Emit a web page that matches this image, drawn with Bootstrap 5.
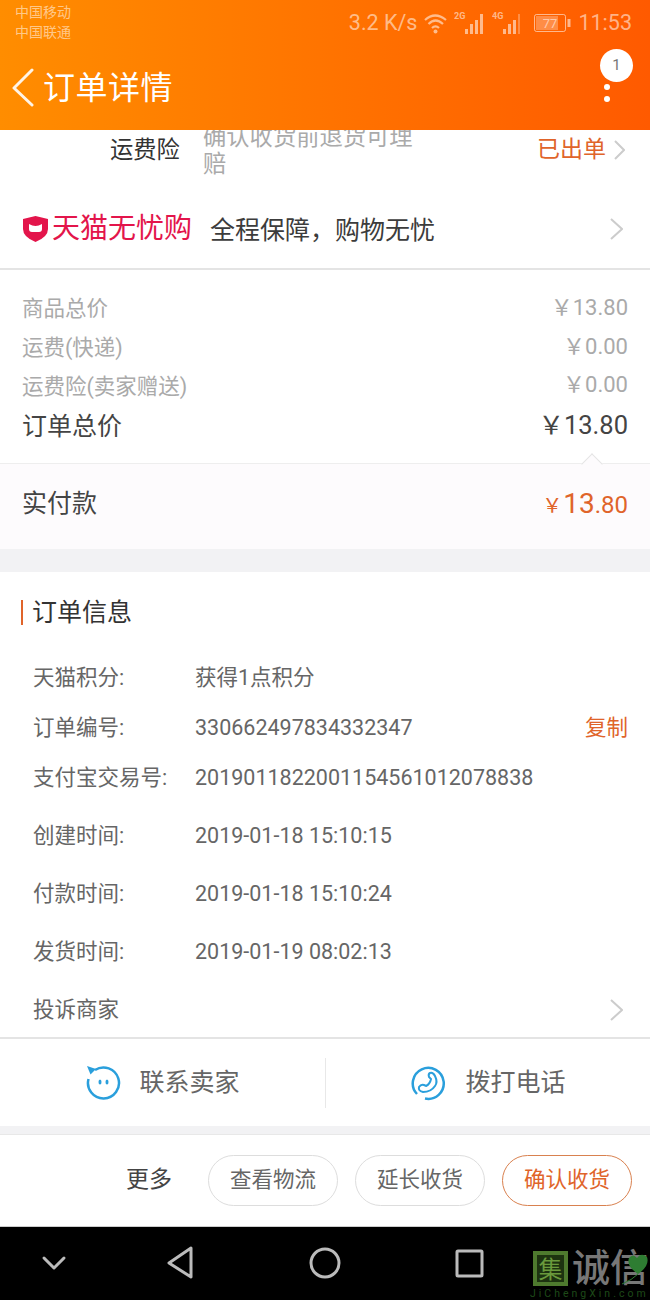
<!DOCTYPE html>
<html lang="zh">
<head>
    <meta charset="UTF-8">
    <title>订单详情</title>
    <link href="https://cdn.jsdelivr.net/npm/bootstrap@5.3.2/dist/css/bootstrap.min.css" rel="stylesheet">
    <style>
        body { width: 650px; height: 1300px; overflow: hidden; background: #fff; font-family: Roboto, "Noto Sans CJK SC", sans-serif; color: #333; }
        .app-head { height: 130px; background: linear-gradient(90deg, #ff8d00, #ff5a00); color: #fff; }
        .status-bar { height: 44px; padding: 2px 18px 0 15px; color: rgba(255,255,255,.55); }
        .carrier { font-size: 14px; line-height: 20px; }
        .status-right { font-size: 21.5px; margin-top: 2px; gap: 6px; line-height: 28px; height: 38px; }
        .title-bar { height: 86px; padding-left: 12px; }
        .title-bar h1 { font-size: 32px; font-weight: 400; margin: 3px 0 0 7px; letter-spacing: .5px; line-height: 83px; }
        .more-btn { right: 16px; top: 49px; width: 34px; height: 60px; }
        .num-dot { width: 33px; height: 33px; background: #fff; color: #777; font-size: 15px; }
        .menu-dot { width: 6px; height: 6px; background: #fff; left: 4px; }
        .dot-one { top: 35px; }
        .dot-two { top: 47px; }
        .ins-row { height: 60px; overflow: hidden; padding: 0 25px 20px 0; }
        .ins-name { width: 203px; padding-left: 110px; font-size: 23.3px; color: #333; }
        .ins-desc { width: 222px; font-size: 23.3px; line-height: 27px; color: #aaa; margin-top: 1px; }
        .ins-state { font-size: 23px; color: #e0642a; }
        .guard-row { height: 80px; padding: 0 27px 0 22px; border-bottom: 2px solid #e4e4e4; }
        .guard-logo { font-size: 28px; color: #e3154b; margin-left: 3px; line-height: 1; }
        .guard-text { font-size: 25px; margin: 3px 0 0 18px; color: #3c3c3c; }
        .price-box { height: 193px; padding: 20px 22px 0; color: #aaa; font-size: 21.5px; }
        .price-line { height: 38.7px; }
        .price-line .amt { font-size: 22px; margin-bottom: 4px; }
        .price-sum { color: #444; font-size: 25px; height: 42px; }
        .price-sum .amt { font-size: 25.5px; margin-bottom: 4px; }
        .pay-box { height: 86px; padding: 0 22px 5px; background: #fdfbfd; border-top: 1px solid #eee; font-size: 25px; color: #444; }
        .pay-arrow { right: 50px; top: -8px; width: 16px; height: 16px; background: #fdfbfd; border-top: 1px solid #e4e4e4; border-left: 1px solid #e4e4e4; transform: rotate(45deg) scale(.95); }
        .pay-amt { color: #e0642a; font-size: 24px; }
        .pay-amt i { font-style: normal; font-size: 20px; margin-right: 1px; }
        .pay-amt b { font-weight: 400; font-size: 28px; }
        .gap-big { height: 23px; background: #f2f2f4; }
        .info-box { height: 467px; border-bottom: 2px solid #e4e4e4; }
        .info-title { height: 81px; padding-top: 28px; font-size: 25px; }
        .info-title span { border-left: 2px solid #e0642a; padding-left: 9px; margin-left: 21px; line-height: 25px; display: block; }
        .info-row { padding: 0 22px 0 33px; font-size: 21.5px; color: #666; height: 50px; }
        .info-row .lbl { width: 162px; }
        .info-far { height: 58px; padding-top: 8px; }
        .info-last { padding-right: 27px; }
        .copy-link { margin-left: auto; color: #e0642a; }
        .contact-bar { height: 87px; }
        .contact-item { font-size: 25px; color: #666; gap: 18px; }
        .contact-sep { width: 1px; height: 50px; background: #e8e8e8; }
        .gap-small { height: 9px; background: #f2f2f4; border-bottom: 1px solid #e8e8e8; }
        .action-bar { height: 92px; padding-right: 18px; border-bottom: 1px solid #ccc; gap: 17px; }
        .more-text { font-size: 23px; margin-right: 19px; color: #444; }
        .pill-btn { width: 130px; height: 51px; border-radius: 26px; border: 1px solid #ddd; font-size: 21.5px; color: #666; background: #fff; padding: 0; }
        .pill-go { color: #e0642a; border-color: #d9814f; }
        .sys-nav { height: 73px; background: #000; }
        .sys-lines { left: 0; top: 0; }
        .mark-logo { right: 0; top: 23px; width: 118px; height: 50px; }
        .mark-box { left: 1px; top: 1px; width: 35px; height: 35px; border: 4px solid #4e7a2e; background: #1d3310; color: #6a9a3c; font-size: 24px; line-height: 26px; text-align: center; font-family: "Noto Sans CJK TC", sans-serif; }
        .mark-name { left: 40px; top: 0; color: #777; font-size: 38px; line-height: 36px; white-space: nowrap; font-weight: 500; }
        .mark-leaf { left: 88px; top: 2px; }
        .mark-url { left: -2px; top: 38px; color: #1e4a18; font-size: 10.5px; letter-spacing: 3px; line-height: 12px; white-space: nowrap; }
    </style>
</head>
<body>

<div class="app-head position-relative">
    <div class="status-bar d-flex justify-content-between">
        <div class="carrier">中国移动<br>中国联通</div>
        <div class="status-right d-flex align-items-center">
            <span>3.2 K/s</span>
            <svg width="27" height="22" viewBox="0 0 27 22" fill="none" stroke="currentColor" stroke-width="2.2">
                <path d="M2 8 Q12 -1 23 8"/><path d="M5.5 12 Q12.5 5 20 12"/><path d="M9 16 Q12.5 12.500 16 16"/>
                <circle cx="12.500" cy="19.500" r="2" fill="currentColor" stroke="none"/>
            </svg>
            <svg width="54" height="24" viewBox="0 0 54 24" fill="currentColor" style="margin-left:-2px">
                <text x="0" y="8" font-size="9" font-family="Roboto" font-weight="700">2G</text>
                <rect x="11" y="18" width="3" height="5"/><rect x="16" y="13" width="3" height="10"/><rect x="21" y="9" width="3" height="14"/><rect x="26" y="3" width="3" height="20"/>
            </svg>
            <svg width="54" height="24" viewBox="0 0 54 24" fill="currentColor" style="margin-left:-22px">
                <text x="0" y="8" font-size="9" font-family="Roboto" font-weight="700">4G</text>
                <rect x="11" y="18" width="3" height="5"/><rect x="16" y="13" width="3" height="10"/><rect x="21" y="9" width="3" height="14"/><rect x="26" y="3" width="2" height="20" opacity=".5"/>
            </svg>
            <svg width="38" height="20" viewBox="0 0 38 20" style="margin-left:-18px">
                <rect x=".5" y="1.500" width="31" height="17" rx="2" fill="none" stroke="currentColor"/>
                <rect x="2" y="3" width="22" height="14" fill="currentColor" opacity=".5"/>
                <rect x="33.500" y="6" width="3" height="8" fill="currentColor"/>
                <text x="16" y="15" font-size="13" text-anchor="middle" font-family="Roboto" fill="currentColor">77</text>
            </svg>
            <span>11:53</span>
        </div>
    </div>
    <div class="title-bar d-flex align-items-center">
        <svg width="24" height="40" viewBox="0 0 24 40" fill="none" stroke="#fff" stroke-opacity=".9" stroke-width="3" stroke-linecap="round" stroke-linejoin="round">
            <path d="M20 3 L2 21 L20 38"/>
        </svg>
        <h1>订单详情</h1>
    </div>
    <div class="more-btn position-absolute">
        <div class="num-dot rounded-circle d-flex align-items-center justify-content-center position-absolute">1</div>
        <span class="menu-dot dot-one rounded-circle position-absolute"></span>
        <span class="menu-dot dot-two rounded-circle position-absolute"></span>
    </div>
</div>

<div class="ins-row d-flex align-items-center">
    <div class="ins-name">运费险</div>
    <div class="ins-desc">确认收货前退货可理赔</div>
    <div class="ins-state ms-auto d-flex align-items-center gap-2">已出单
        <svg width="11" height="20" viewBox="0 0 11 20" fill="none" stroke="#ccc" stroke-width="2"><path d="M1 1 L10 10 L1 19"/></svg>
    </div>
</div>

<div class="guard-row d-flex align-items-center">
    <svg width="27" height="28" viewBox="0 0 27 28">
        <path d="M13.500 1 L26 4 V14 Q26 22 13.500 27 Q1 22 1 14 V4 Z" fill="#e3154b"/>
        <path d="M7 9 Q13.500 13 20 9 V14 Q20 17 17 17 H10 Q7 17 7 14 Z" fill="#fff"/>
    </svg>
    <span class="guard-logo">天猫无忧购</span>
    <span class="guard-text">全程保障，购物无忧</span>
    <svg class="ms-auto" width="13" height="22" viewBox="0 0 13 22" fill="none" stroke="#ccc" stroke-width="2"><path d="M1 1 L12 11 L1 21"/></svg>
</div>

<div class="price-box">
    <div class="price-line d-flex justify-content-between align-items-center"><span>商品总价</span><span class="amt">￥13.80</span></div>
    <div class="price-line d-flex justify-content-between align-items-center"><span>运费(快递)</span><span class="amt">￥0.00</span></div>
    <div class="price-line d-flex justify-content-between align-items-center"><span>运费险(卖家赠送)</span><span class="amt">￥0.00</span></div>
    <div class="price-sum d-flex justify-content-between align-items-center"><span>订单总价</span><span class="amt">￥13.80</span></div>
</div>

<div class="pay-box d-flex justify-content-between align-items-center position-relative">
    <span class="pay-arrow position-absolute"></span>
    <span>实付款</span>
    <span class="pay-amt"><i>￥</i><b>13</b>.80</span>
</div>

<div class="gap-big"></div>

<div class="info-box">
    <div class="info-title"><span>订单信息</span></div>
    <div class="info-row d-flex align-items-center"><span class="lbl">天猫积分:</span><span>获得1点积分</span></div>
    <div class="info-row d-flex align-items-center"><span class="lbl">订单编号:</span><span>330662497834332347</span><span class="copy-link">复制</span></div>
    <div class="info-row d-flex align-items-center"><span class="lbl">支付宝交易号:</span><span>2019011822001154561012078838</span></div>
    <div class="info-row info-far d-flex align-items-center"><span class="lbl">创建时间:</span><span>2019-01-18 15:10:15</span></div>
    <div class="info-row info-far d-flex align-items-center"><span class="lbl">付款时间:</span><span>2019-01-18 15:10:24</span></div>
    <div class="info-row info-far d-flex align-items-center"><span class="lbl">发货时间:</span><span>2019-01-19 08:02:13</span></div>
    <div class="info-row info-far info-last d-flex align-items-center justify-content-between"><span>投诉商家</span>
        <svg width="13" height="22" viewBox="0 0 13 22" fill="none" stroke="#ccc" stroke-width="2"><path d="M1 1 L12 11 L1 21"/></svg>
    </div>
</div>

<div class="contact-bar d-flex align-items-center">
    <div class="contact-item col-6 d-flex align-items-center justify-content-center">
        <svg width="36" height="36" viewBox="0 0 36 36" fill="none" stroke="#2a9fdc" stroke-width="2.500">
            <path d="M10 5 A15.500 15.500 0 1 1 3.500 14"/>
            <path d="M2 1 L11 4 L5.500 9.500 Z" fill="#2a9fdc" stroke="none"/>
            <ellipse cx="15" cy="17" rx="1.500" ry="2.500" fill="#2a9fdc" stroke="none"/>
            <ellipse cx="22" cy="17" rx="1.500" ry="2.500" fill="#2a9fdc" stroke="none"/>
        </svg>
        <span>联系卖家</span>
    </div>
    <div class="contact-sep flex-shrink-0"></div>
    <div class="contact-item col-6 d-flex align-items-center justify-content-center">
        <svg width="36" height="36" viewBox="0 0 36 36" fill="none" stroke="#2a9fdc" stroke-width="2.500">
            <path d="M6 29 A15.500 15.500 0 1 1 14 33.500"/>
            <path d="M19 8 Q22 7 24 11 Q27 17 24 21 Q20 27 12 27 Q7 26 8 22 Q10 19 13 20 L15 21 Q19 19 20 14 L18 12 Q17 9 19 8 Z" stroke-width="2"/>
        </svg>
        <span>拨打电话</span>
    </div>
</div>

<div class="gap-small"></div>

<div class="action-bar d-flex align-items-center justify-content-end">
    <span class="more-text">更多</span>
    <button type="button" class="btn pill-btn">查看物流</button>
    <button type="button" class="btn pill-btn">延长收货</button>
    <button type="button" class="btn pill-btn pill-go">确认收货</button>
</div>

<div class="sys-nav position-relative d-flex align-items-center">
    <svg class="sys-lines position-absolute" width="650" height="73" viewBox="0 0 650 73" fill="none" stroke="#bbb" stroke-width="3" stroke-linejoin="round" stroke-linecap="round">
        <path d="M44 31 L54 41 L64 31"/>
        <path d="M191 21 L169 36 L191 50 Z"/>
        <circle cx="325" cy="36" r="14"/>
        <rect x="457" y="24" width="25" height="25" rx="1"/>
    </svg>
    <div class="mark-logo position-absolute">
        <div class="mark-box position-absolute">集</div>
        <div class="mark-name position-absolute">诚信</div>
        <svg class="mark-leaf position-absolute" width="30" height="34" viewBox="0 0 30 34">
            <path d="M18 22 Q6 14 9 6 Q13 1 17 6 Q21 0 27 5 Q30 14 18 22 Z" fill="#2e7d32"/>
            <path d="M18 22 Q12 28 2 32" fill="none" stroke="#2e7d32" stroke-width="1"/>
        </svg>
        <div class="mark-url position-absolute">JiChengXin.com</div>
    </div>
</div>

<script src="https://cdn.jsdelivr.net/npm/bootstrap@5.3.2/dist/js/bootstrap.bundle.min.js"></script>
</body>
</html>
